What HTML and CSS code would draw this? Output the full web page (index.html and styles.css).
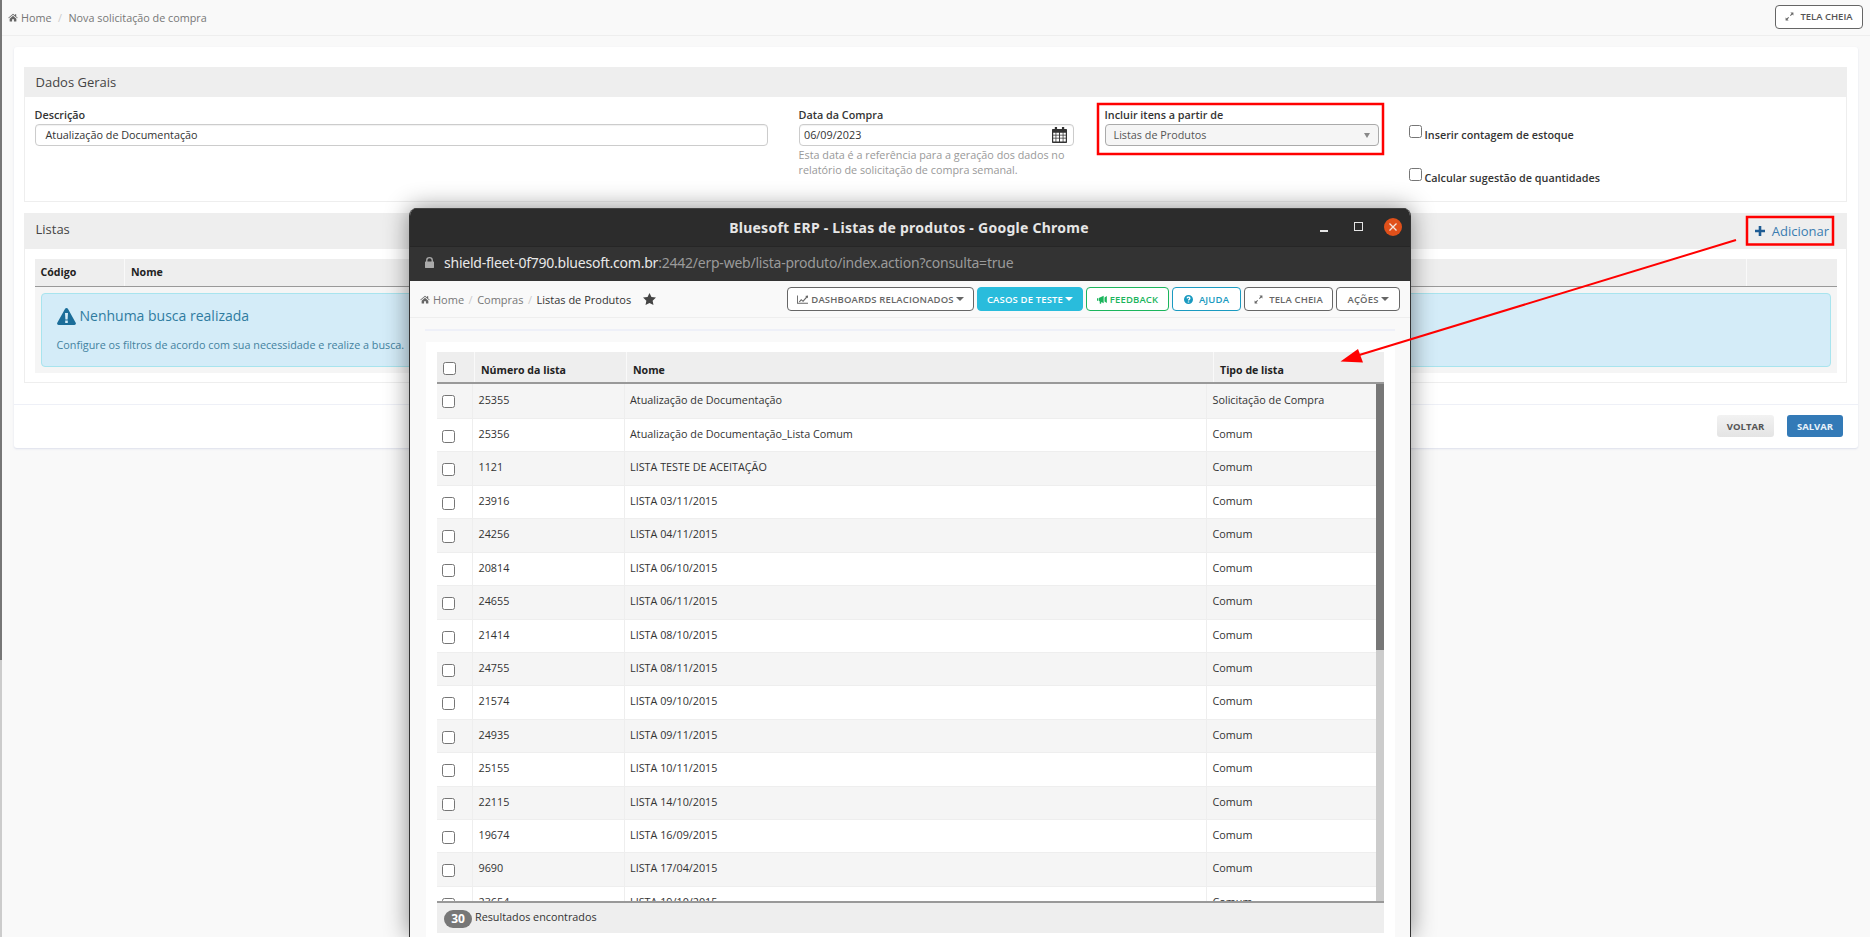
FILE: index.html
```html
<!DOCTYPE html>
<html lang="pt-BR">
<head>
<meta charset="utf-8">
<title>Nova solicitação de compra</title>
<link rel="stylesheet" href="styles.css">
</head>
<body>
<svg width="0" height="0" class="defs">
  <symbol id="i-home" viewBox="0 0 14 12"><path d="M7 0.6 0.4 6.3l.7.8L7 2.1l5.9 5 .7-.8L11.5 4.5V1.3H9.8v1.7zM2.3 7.6v4h3.4V8.5h2.6v3.1h3.4v-4L7 3.6z"/></symbol>
  <symbol id="i-expand" viewBox="0 0 12 12"><path d="M7.2 0.8H11.2V4.8L9.7 3.3 7.6 5.4 6.6 4.4 8.7 2.3zM4.8 11.2H.8V7.2L2.3 8.7 4.4 6.6 5.4 7.6 3.3 9.7z"/></symbol>
</svg>
<div class="shell">
  <aside class="page-scroll"><div class="page-thumb"></div></aside>
  <main class="page">
    <nav class="crumbs">
      <div class="crumb-trail">
        <svg class="ico-home"><use href="#i-home"/></svg>
        <span>Home</span><span class="slash">/</span><span>Nova solicitação de compra</span>
      </div>
      <button class="btn-full"><svg class="ico-exp"><use href="#i-expand"/></svg>TELA CHEIA</button>
    </nav>
    <section class="card">
      <div class="card-body">
        <div class="panel panel-data">
          <h2 class="panel-head">Dados Gerais</h2>
          <div class="fields">
            <div class="field">
              <label class="label">Descrição</label>
              <div class="input input-desc">Atualização de Documentação</div>
            </div>
            <div class="field">
              <label class="label">Data da Compra</label>
              <div class="input input-date">06/09/2023
                <svg class="ico-cal" viewBox="0 0 16 17"><path d="M3 0h2.4v2.2H10.600V0H13v2.200h2.200a.8.8 0 0 1 .8.8V16.200a.8.8 0 0 1-.8.800H.8a.8.8 0 0 1-.8-.8V3a.8.8 0 0 1 .8-.8H3z"/><path fill="#fff" d="M1.300 6h2.500v2.200H1.300zM4.600 6h2.900v2.200H4.600zM8.500 6h2.900v2.200H8.500zM12.200 6h2.500v2.200h-2.500zM1.300 9h2.500v2.400H1.300zM4.600 9h2.900v2.400H4.600zM8.500 9h2.900v2.400H8.500zM12.200 9h2.500v2.400h-2.500zM1.300 12.200h2.500v3.300H1.300zM4.600 12.200h2.900v3.300H4.600zM8.500 12.200h2.900v3.300H8.500zM12.200 12.200h2.500v3.300h-2.500z"/></svg>
              </div>
              <p class="hint">Esta data é a referência para a geração dos dados no relatório de solicitação de compra semanal.</p>
            </div>
            <div class="field">
              <label class="label">Incluir itens a partir de</label>
              <div class="select">Listas de Produtos<span class="select-caret"></span></div>
            </div>
            <div class="checks">
              <label class="check"><input type="checkbox" class="cb"><span>Inserir contagem de estoque</span></label>
              <label class="check"><input type="checkbox" class="cb"><span>Calcular sugestão de quantidades</span></label>
            </div>
          </div>
        </div>
        <div class="panel panel-lists">
          <div class="panel-head panel-head-lists">
            <h2 class="panel-title">Listas</h2>
            <a class="add"><svg class="ico-plus" viewBox="0 0 10 10"><path d="M3.700 0h2.600v3.700H10v2.600H6.300V10H3.700V6.300H0V3.700h3.700z"/></svg>Adicionar</a>
          </div>
          <div class="lists-body">
            <div class="lists-table">
              <div class="lists-hrow">
                <div class="lists-th th-code">Código</div>
                <div class="lists-th th-name">Nome</div>
                <div class="lists-th th-end"></div>
              </div>
              <div class="lists-empty">
                <div class="alert">
                  <h3 class="alert-title">
                    <svg class="ico-warn" viewBox="0 0 19 17"><path fill-rule="evenodd" d="M9.500 0c.6 0 1.100.3 1.400.8l7.800 14c.6 1-.1 2.200-1.300 2.200H1.600C.4 17-.3 15.800.3 14.800l7.800-14C8.400.3 8.900 0 9.500 0zM8 5l.4 6.500h2.200L11 5zM8.200 12.500v2.500h2.600v-2.500z"/></svg>
                    Nenhuma busca realizada
                  </h3>
                  <p class="alert-text">Configure os filtros de acordo com sua necessidade e realize a busca.</p>
                </div>
              </div>
            </div>
          </div>
        </div>
      </div>
      <footer class="card-foot">
        <button class="btn-back">VOLTAR</button>
        <button class="btn-save">SALVAR</button>
      </footer>
    </section>
  </main>
</div>

<div class="window">
  <header class="win-title">
    <span class="win-name">Bluesoft ERP - Listas de produtos - Google Chrome</span>
    <div class="win-ctrls">
      <span class="ctl-min"></span>
      <span class="ctl-max"></span>
      <span class="ctl-close"><svg viewBox="0 0 10 10" class="ctl-x"><path d="M1.500 1.500l7 7M8.500 1.500l-7 7"/></svg></span>
    </div>
  </header>
  <div class="win-url">
    <svg class="ico-lock" viewBox="0 0 10 12"><path d="M1.200 5V3.600a3.800 3.600 0 0 1 7.600 0V5h.7a.5.5 0 0 1 .5.500v6a.5.5 0 0 1-.5.500H.5a.5.5 0 0 1-.5-.5v-6A.5.5 0 0 1 .5 5zM2.700 5h4.600V3.600a2.300 2.200 0 0 0-4.600 0z"/></svg>
    <span class="url-host">shield-fleet-0f790.bluesoft.com.br</span><span class="url-path">:2442/erp-web/lista-produto/index.action?consulta=true</span>
  </div>
  <div class="win-page">
    <nav class="w-crumbs">
      <div class="w-trail">
        <svg class="ico-home"><use href="#i-home"/></svg>
        <span class="w-link">Home</span><span class="w-slash">/</span><span class="w-link">Compras</span><span class="w-slash">/</span><span class="w-current">Listas de Produtos</span>
        <svg class="ico-star" viewBox="0 0 14 13"><path d="M7 0l2.100 4.400 4.900.6-3.600 3.300.9 4.700L7 10.700 2.700 13l.9-4.700L0 5l4.900-.6z"/></svg>
      </div>
      <div class="w-actions">
        <button class="wb wb-dash"><svg class="ico-chart" viewBox="0 0 12 9"><path d="M0 0h1v8h11v1H0z"/><path d="M2 7l2.500-3 2 1.500L10 1.500 8.800.7 12 0v3.200l-1-.8-4.300 4.800-2-1.500L3 7.500z"/></svg>DASHBOARDS RELACIONADOS<i class="caret"></i></button>
        <button class="wb wb-tests">CASOS DE TESTE<i class="caret caret-w"></i></button>
        <button class="wb wb-feed"><svg class="ico-horn" viewBox="0 0 12 10"><path d="M0 3.500h1.500V6.500H0zM2.200 3.200 8 .5v9L5.200 8l-.3 2H3.400l-.3-3.200-.9-.3zM9 2.500l2.800-1.800v8.600L9 7.500z"/></svg>FEEDBACK</button>
        <button class="wb wb-help"><svg class="ico-q" viewBox="0 0 12 12"><path fill-rule="evenodd" d="M6 0a6 6 0 1 1 0 12A6 6 0 0 1 6 0zM5 8.600v1.500h2V8.600zM6 2C4.600 2 3.500 2.800 3.400 4.200l1.700.3c.1-.6.400-1 .9-1s.9.300.9.800c0 .9-1.700 1.200-1.700 3h1.800c0-1 1.700-1.300 1.700-3.100C8.700 2.900 7.500 2 6 2z"/></svg>AJUDA</button>
        <button class="wb wb-full"><svg class="ico-exp"><use href="#i-expand"/></svg>TELA CHEIA</button>
        <button class="wb wb-act">AÇÕES<i class="caret"></i></button>
      </div>
    </nav>
    <div class="w-content">
      <div class="w-rule"></div>
      <div class="w-card">
        <div class="grid">
          <div class="g-head">
            <div class="g-th g-th-check"><input type="checkbox" class="cb"></div>
            <div class="g-th">Número da lista</div>
            <div class="g-th">Nome</div>
            <div class="g-th">Tipo de lista</div>
          </div>
          <div class="g-view">
            <div class="g-rows">
              <div class="g-row"><div class="g-td g-td-check"><input type="checkbox" class="cb"></div><div class="g-td">25355</div><div class="g-td">Atualização de Documentação</div><div class="g-td">Solicitação de Compra</div></div>
              <div class="g-row"><div class="g-td g-td-check"><input type="checkbox" class="cb"></div><div class="g-td">25356</div><div class="g-td">Atualização de Documentação_Lista Comum</div><div class="g-td">Comum</div></div>
              <div class="g-row"><div class="g-td g-td-check"><input type="checkbox" class="cb"></div><div class="g-td">1121</div><div class="g-td">LISTA TESTE DE ACEITAÇÃO</div><div class="g-td">Comum</div></div>
              <div class="g-row"><div class="g-td g-td-check"><input type="checkbox" class="cb"></div><div class="g-td">23916</div><div class="g-td">LISTA 03/11/2015</div><div class="g-td">Comum</div></div>
              <div class="g-row"><div class="g-td g-td-check"><input type="checkbox" class="cb"></div><div class="g-td">24256</div><div class="g-td">LISTA 04/11/2015</div><div class="g-td">Comum</div></div>
              <div class="g-row"><div class="g-td g-td-check"><input type="checkbox" class="cb"></div><div class="g-td">20814</div><div class="g-td">LISTA 06/10/2015</div><div class="g-td">Comum</div></div>
              <div class="g-row"><div class="g-td g-td-check"><input type="checkbox" class="cb"></div><div class="g-td">24655</div><div class="g-td">LISTA 06/11/2015</div><div class="g-td">Comum</div></div>
              <div class="g-row"><div class="g-td g-td-check"><input type="checkbox" class="cb"></div><div class="g-td">21414</div><div class="g-td">LISTA 08/10/2015</div><div class="g-td">Comum</div></div>
              <div class="g-row"><div class="g-td g-td-check"><input type="checkbox" class="cb"></div><div class="g-td">24755</div><div class="g-td">LISTA 08/11/2015</div><div class="g-td">Comum</div></div>
              <div class="g-row"><div class="g-td g-td-check"><input type="checkbox" class="cb"></div><div class="g-td">21574</div><div class="g-td">LISTA 09/10/2015</div><div class="g-td">Comum</div></div>
              <div class="g-row"><div class="g-td g-td-check"><input type="checkbox" class="cb"></div><div class="g-td">24935</div><div class="g-td">LISTA 09/11/2015</div><div class="g-td">Comum</div></div>
              <div class="g-row"><div class="g-td g-td-check"><input type="checkbox" class="cb"></div><div class="g-td">25155</div><div class="g-td">LISTA 10/11/2015</div><div class="g-td">Comum</div></div>
              <div class="g-row"><div class="g-td g-td-check"><input type="checkbox" class="cb"></div><div class="g-td">22115</div><div class="g-td">LISTA 14/10/2015</div><div class="g-td">Comum</div></div>
              <div class="g-row"><div class="g-td g-td-check"><input type="checkbox" class="cb"></div><div class="g-td">19674</div><div class="g-td">LISTA 16/09/2015</div><div class="g-td">Comum</div></div>
              <div class="g-row"><div class="g-td g-td-check"><input type="checkbox" class="cb"></div><div class="g-td">9690</div><div class="g-td">LISTA 17/04/2015</div><div class="g-td">Comum</div></div>
              <div class="g-row"><div class="g-td g-td-check"><input type="checkbox" class="cb"></div><div class="g-td">23654</div><div class="g-td">LISTA 19/10/2015</div><div class="g-td">Comum</div></div>
            </div>
            <div class="g-scroll"><div class="g-thumb"></div></div>
          </div>
          <div class="g-foot"><span class="count">30</span><span>Resultados encontrados</span></div>
        </div>
      </div>
    </div>
  </div>
</div>

<svg class="marks" width="1870" height="937" viewBox="0 0 1870 937">
  <rect x="1098" y="104" width="285" height="50" fill="none" stroke="#f00" stroke-width="2.500"/>
  <rect x="1747" y="217" width="86" height="27.500" fill="none" stroke="#f00" stroke-width="2.500"/>
  <line x1="1736" y1="240" x2="1356" y2="356" stroke="#f00" stroke-width="2"/>
  <polygon points="1340.500,361.500 1358,349 1363,362.500" fill="#f00"/>
</svg>
</body>
</html>
```
FILE: styles.css
```css
* { box-sizing: border-box; }
html, body { margin: 0; height: 937px; overflow: hidden; }
body { background: #f9f9f9; color: #333; font-family: "Open Sans", "Noto Sans", sans-serif; font-size: 10.800px; position: relative; }
h2, h3, p { margin: 0; font-weight: 400; }
button { font-family: inherit; cursor: pointer; }
.defs { position: absolute; }

.shell { display: flex; height: 937px; }
.page-scroll { width: 2px; background: #ccc; flex: none; }
.page-thumb { height: 660px; background: #777; }
.page { flex: 1; min-width: 0; }

.crumbs { height: 36px; display: flex; align-items: center; justify-content: space-between; padding: 0 7px 0 6px; border-bottom: 1px solid #eee; }
.crumb-trail { display: flex; align-items: center; color: #777; font-size: 10.800px; }
.ico-home { width: 10px; height: 9px; fill: #666; margin-right: 3px; flex: none; }
.slash { color: #ccc; margin: 0 6.500px; }
.btn-full { height: 24px; width: 88px; margin-top: -2px; background: #fff; border: 1px solid #666; border-radius: 4px; color: #555; font-size: 9.500px; font-weight: 600; padding: 0; display: flex; align-items: center; justify-content: center; }
.ico-exp { width: 9px; height: 9px; fill: #666; margin-right: 6px; flex: none; }

.card { margin: 11px 12px 0; background: #fff; height: 401px; border-radius: 3px; box-shadow: 0 1px 2px rgba(200,205,225,.6); display: flex; flex-direction: column; }
.card-body { flex: 1; padding: 20px 11px 0 9.500px; }
.panel { border: 1px solid #eee; border-top: 0; }
.panel-data { height: 135px; }
.panel-lists { height: 170px; margin-top: 11px; }
.panel-head { background: #eee; height: 30px; margin: 0 -1px; padding: 0 12px; display: flex; align-items: center; font-size: 13px; color: #444; }

.fields { display: grid; grid-template-columns: 734px 276px 274px 1fr; column-gap: 30px; padding: 9px 0 0 10px; }
.label { display: block; font-weight: 600; font-size: 10.800px; color: #333; line-height: 18px; height: 18px; }
.input { height: 22px; border: 1px solid #ccc; border-radius: 4px; background: #fff; line-height: 20px; color: #333; box-shadow: inset 0 1px 1px rgba(0,0,0,.06); position: relative; }
.input-desc { padding-left: 10px; width: 733px; }
.input-date { width: 275px; padding-left: 4.500px; }
.ico-cal { position: absolute; right: 6px; top: 2px; width: 15px; height: 16px; fill: #333; }
.hint { color: #999; line-height: 14.500px; width: 276px; margin-top: 2px; }
.select { height: 22px; border: 1px solid #aaa; border-radius: 4px; background: #f5f5f5; color: #555; line-height: 20px; padding-left: 8px; position: relative; width: 274px; }
.select-caret { position: absolute; right: 8px; top: 8px; border: 3.500px solid transparent; border-top: 5px solid #888; border-bottom: 0; }
.checks { display: flex; flex-direction: column; }
.check { display: flex; align-items: flex-start; font-weight: 600; font-size: 10.800px; color: #333; height: 43px; padding-top: 19px; }
.check span { margin-top: 2px; margin-left: 3px; }
.cb { appearance: none; -webkit-appearance: none; width: 13px; height: 13px; margin: 0; background: #fff; border: 1px solid #767676; border-radius: 2.500px; flex: none; display: block; }

.panel-head-lists { height: 36px; justify-content: space-between; padding: 0 11px 0 12px; }
.panel-title { font-size: 13px; color: #444; padding-bottom: 5px; }
.add { display: flex; align-items: center; font-size: 13px; color: #3a7cb0; margin-right: 7px; }
.ico-plus { width: 10px; height: 10px; fill: #1f5c94; margin-right: 7px; }
.lists-body { padding: 10px 9px 0 10px; }
.lists-hrow { display: grid; grid-template-columns: 89.500px 1fr 91px; height: 28px; background: #eee; border-bottom: 1px solid #999; }
.lists-th { font-weight: 700; font-size: 10.600px; color: #222; padding: 0 6px; line-height: 27px; border-left: 1px solid #f9f9f9; }
.th-code { border-left: 0; }
.lists-empty { background: #f5f5f5; padding: 6px; height: 86px; }
.alert { height: 74px; background: #d4ecf8; border: 1px solid #a8e4ee; border-radius: 4px; padding: 11px 15px; color: #31708f; }
.alert-title { font-size: 14px; color: #2f7ba0; display: flex; align-items: center; line-height: 22px; }
.ico-warn { width: 19px; height: 17px; fill: #1b6d99; margin-right: 4px; }
.alert-text { font-size: 10.800px; margin-top: 10px; color: #43829f; }

.card-foot { height: 44px; border-top: 1px solid #eef0f7; display: flex; justify-content: flex-end; align-items: flex-start; gap: 13px; padding: 10px 15px 0 0; }
.btn-back, .btn-save { height: 22px; width: 57px; border-radius: 3px; border: 0; font-size: 9.500px; font-weight: 700; padding: 0; }
.btn-back { background: linear-gradient(#f2f2f2, #e4e4e4); color: #555; }
.btn-save { width: 56px; background: #337ab7; color: #e8f2fa; }

.window { position: absolute; left: 409px; top: 208px; width: 1002px; height: 729px; background: #f9f9f9; border-radius: 8px 8px 0 0; border-right: 1px solid #333; border-left: 1px solid #333; box-shadow: 0 0 24px rgba(0,0,0,.45); overflow: hidden; }
.win-title { height: 38px; background: #2c2c2c; border-top: 1px solid #444; display: flex; align-items: center; justify-content: center; position: relative; }
.win-name { font-family: "Noto Sans", "Open Sans", sans-serif; font-weight: 700; font-size: 14px; color: #e6e6e6; letter-spacing: .26px; margin-left: -2px; }
.win-ctrls { position: absolute; right: 8px; top: 9px; display: flex; align-items: center; }
.ctl-min { width: 8px; height: 1.500px; background: #e6e6e6; margin: 8px 26px 0 0; }
.ctl-max { width: 9px; height: 9px; border: 1px solid #e6e6e6; margin: 0 21px 2px 0; }
.ctl-close { width: 18px; height: 18px; border-radius: 50%; background: #e0501a; display: flex; align-items: center; justify-content: center; }
.ctl-x { width: 10px; height: 10px; stroke: #f4e6df; stroke-width: 1.300; fill: none; }
.win-url { height: 35px; background: #333; display: flex; align-items: center; padding: 0 0 3px 15px; font-family: "Noto Sans", "Open Sans", sans-serif; font-size: 14px; letter-spacing: -.23px; white-space: nowrap; border-top: 1px solid #262626; }
.ico-lock { width: 9px; height: 11px; fill: #aaa; margin-right: 10px; flex: none; }
.url-host { color: #e8e8e8; }
.url-path { color: #9a9a9a; }
.win-page { height: 656px; display: flex; flex-direction: column; }

.w-crumbs { height: 37px; flex: none; display: flex; align-items: center; justify-content: space-between; padding: 0 10px 0 10px; border-bottom: 1px solid #eee; }
.w-trail { display: flex; align-items: center; font-size: 11px; color: #777; }
.w-slash { color: #ccc; margin: 0 4.500px; }
.w-current { color: #333; font-weight: 500; }
.ico-star { width: 13px; height: 12px; fill: #444; margin-left: 12px; }
.w-actions { display: flex; gap: 3px; }
.wb { height: 24px; border-radius: 4px; background: #fff; border: 1px solid #666; color: #666; font-size: 9.500px; letter-spacing: .15px; font-weight: 600; padding: 0; display: flex; align-items: center; justify-content: center; white-space: nowrap; }
.wb-dash { width: 187px; }
.wb-tests { width: 106px; background: #29bcdc; border-color: #29bcdc; color: #fff; }
.wb-feed { width: 83px; border-color: #1bb55c; color: #1bb55c; }
.wb-help { width: 69px; border-color: #1a9ac0; color: #1a9ac0; }
.wb-full { width: 89px; }
.wb-act { width: 64px; }
.caret { display: inline-block; border: 4px solid transparent; border-top: 4.500px solid currentColor; border-bottom: 0; margin-left: 2px; }
.caret-w { color: #fff; }
.ico-chart { width: 11px; height: 9px; fill: #666; margin-right: 3px; }
.ico-horn { width: 10px; height: 9px; fill: #1bb55c; margin-right: 3px; }
.ico-q { width: 9px; height: 9px; fill: #1a9ac0; margin-right: 6px; }

.w-content { flex: 1; padding: 11px 15px 0 15px; min-height: 0; }
.w-rule { height: 2px; background: #eef0f8; }
.w-card { margin: 11px 0 0 1px; background: #fff; height: 595px; padding: 10px 11px 0 11px; }
.g-head { display: grid; grid-template-columns: 37px 152px 587px 1fr; height: 32px; background: #eee; border-bottom: 2px solid #999; }
.g-th { font-weight: 700; font-size: 10.600px; color: #222; padding: 10px 0 0 6px; border-left: 1px solid #f9f9f9; line-height: 17px; }
.g-th-check { border-left: 0; padding: 10px 0 0 6px; }
.g-view { display: flex; height: 517px; overflow: hidden; }
.g-rows { flex: 1; min-width: 0; }
.g-row { display: grid; grid-template-columns: 35px 151.500px 582.500px 1fr; height: 33.430px; background: #fff; border-bottom: 1px solid #eee; }
.g-row:first-child { height: 35px; }
.g-row:first-child .g-td:not(.g-td-check) { padding-top: 7px; }
.g-row:nth-child(odd) { background: #f5f5f5; }
.g-td { padding: 6px 0 0 5.500px; border-left: 1px solid #eee; font-size: 10.800px; line-height: 18px; color: #333; }
.g-td-check { border-left: 0; padding: 11px 0 0 5px; }
.g-scroll { width: 8px; flex: none; background: #ccc; }
.g-thumb { height: 266px; background: #777; }
.g-foot { height: 32px; background: #eee; border-top: 2px solid #999; display: flex; align-items: flex-start; padding: 6px 0 0 7px; color: #333; font-size: 10.800px; line-height: 15px; }
.count { width: 28px; height: 18px; border-radius: 9px; background: #777; color: #fff; font-weight: 700; font-size: 12px; line-height: 18px; text-align: center; margin: 1px 3px 0 0; }

.marks { position: absolute; left: 0; top: 0; pointer-events: none; }
```
